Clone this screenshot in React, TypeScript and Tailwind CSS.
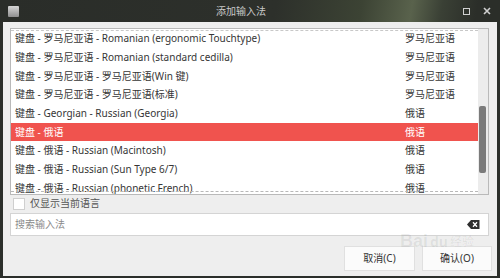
import React from "react";

const rows: [string, string][] = [
  ["键盘 - 罗马尼亚语 - Romanian (ergonomic Touchtype)", "罗马尼亚语"],
  ["键盘 - 罗马尼亚语 - Romanian (standard cedilla)", "罗马尼亚语"],
  ["键盘 - 罗马尼亚语 - 罗马尼亚语(Win 键)", "罗马尼亚语"],
  ["键盘 - 罗马尼亚语 - 罗马尼亚语(标准)", "罗马尼亚语"],
  ["键盘 - Georgian - Russian (Georgia)", "俄语"],
  ["键盘 - 俄语", "俄语"],
  ["键盘 - 俄语 - Russian (Macintosh)", "俄语"],
  ["键盘 - 俄语 - Russian (Sun Type 6/7)", "俄语"],
  ["键盘 - 俄语 - Russian (phonetic French)", "俄语"],
];

const font = { fontFamily: '"Noto Sans", "Noto Sans CJK SC", sans-serif' };

export default function App() {
  return (
    <div
      className="w-[500px] h-[278px] flex flex-col overflow-hidden bg-[#2b2e2a] text-[10px] relative"
      style={font}
    >
      {/* Title bar */}
      <div className="h-[22px] shrink-0 relative flex items-center bg-[linear-gradient(100deg,#2a2d29_0%,#2d302b_55%,#3c4334_72%,#59624c_82%,#3a4035_88%,#2b2e29_95%)]">
        <div className="ml-[8px] w-[11px] h-[11px] rounded-[1px] bg-[linear-gradient(#d6d6d6,#8e8e8e)]" />
        <div className="absolute left-0 right-[18px] top-0 h-full flex items-center justify-center text-[#c9c9c9] text-[10px]">
          添加输入法
        </div>
        <div className="ml-auto flex items-center gap-[13px] mr-[9px]">
          <div className="w-[7px] h-[7px] border-[1.5px] border-[#d0d0d0]" />
          <svg width="8" height="8" viewBox="0 0 8 8">
            <path d="M1 1L7 7M7 1L1 7" stroke="#d0d0d0" strokeWidth="1.6" />
          </svg>
        </div>
      </div>

      {/* Body */}
      <div className="flex-1 bg-[#eeeeee] mx-[3px] mb-[2px] flex flex-col pl-[7px] pt-[6px]">
        {/* List */}
        <div className="w-[479px] h-[167px] border border-[#b9b9b9] bg-white flex relative overflow-hidden">
          <div className="w-[467px] flex flex-col pt-[0.5px]">
            {rows.map(([a, b], i) => {
              const sel = i === 5;
              return (
                <div
                  key={i}
                  className={
                    "h-[18.67px] shrink-0 flex items-center pl-[4px] " +
                    (sel ? "bg-[#f0534e] text-white" : "text-[#363636]")
                  }
                >
                  <span className="w-[390px] whitespace-nowrap">{a}</span>
                  <span className="whitespace-nowrap">{b}</span>
                </div>
              );
            })}
          </div>
          <div className="w-[10px] bg-[#ececec] relative">
            <div className="absolute left-[1px] top-[77px] w-[7px] h-[67px] rounded-[2px] bg-[#7b7b7b]" />
          </div>
          <div className="absolute left-0 right-[10px] top-[1px] border-t border-dashed border-[#c8c8c8]" />
          <div className="absolute left-0 right-[10px] top-[162px] border-t border-dashed border-[#b8b8b8]" />
        </div>

        {/* Checkbox */}
        <div className="flex items-center h-[15px] mt-[1px] pl-[3px]">
          <div className="w-[12px] h-[12px] bg-white border border-[#cfcfcf]" />
          <span className="ml-[5px] text-[#555555]">仅显示当前语言</span>
        </div>

        {/* Search */}
        <div className="mt-[2px] w-[479px] h-[23px] bg-white border border-[#d4d4d4] flex items-center pl-[4px] pr-[8px]">
          <span className="text-[#8a8a8a]">搜索输入法</span>
          <svg className="ml-auto" width="13" height="9" viewBox="0 0 13 9">
            <path d="M4 0H12.5V9H4L0 4.5Z" fill="#2e2e2e" />
            <path d="M6 2.3L10 6.7M10 2.3L6 6.7" stroke="#ffffff" strokeWidth="1.3" />
          </svg>
        </div>

        {/* Buttons */}
        <div className="flex mt-[10px] pl-[334px] gap-[7px]">
          <div className="w-[71px] h-[25px] bg-[#fbfbfb] border border-[#e0e0e0] flex items-center justify-center text-[#333333]">
            取消(C)
          </div>
          <div className="w-[70px] h-[25px] bg-[#fbfbfb] border border-[#e0e0e0] flex items-center justify-center text-[#333333]">
            确认(O)
          </div>
        </div>
      </div>

      {/* Watermark */}
      <div className="absolute left-[400px] top-[228px] flex items-center gap-[2px] text-[#000000]/[0.07] pointer-events-none">
        <span className="text-[18px] font-bold" style={{ fontFamily: '"Liberation Sans", sans-serif' }}>Bai</span>
        <span className="text-[14px] font-bold">du</span>
        <span className="text-[12px]">经验</span>
      </div>
    </div>
  );
}
